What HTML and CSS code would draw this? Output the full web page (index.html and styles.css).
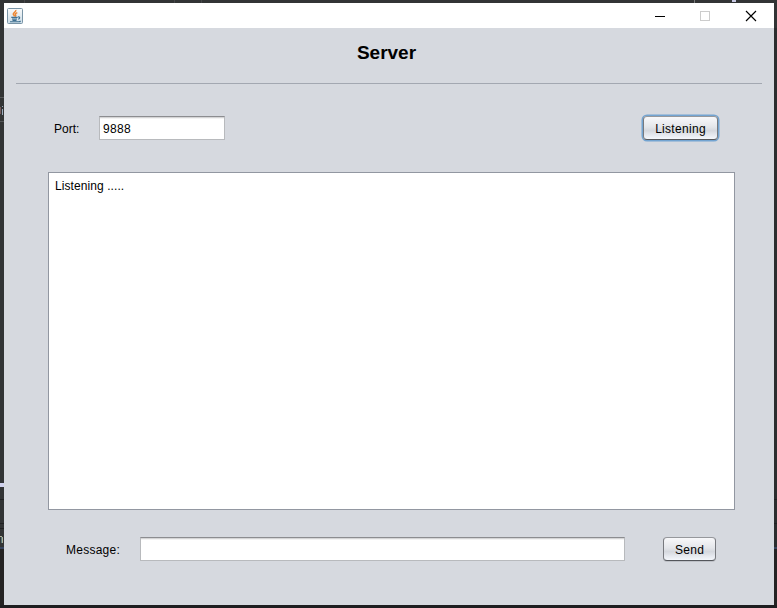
FILE: index.html
```html
<!DOCTYPE html>
<html lang="en">
<head>
<meta charset="utf-8">
<title>Server</title>
<link rel="stylesheet" href="styles.css">
</head>
<body>
<div class="desktop">
  <svg class="backdrop" width="777" height="608" viewBox="0 0 777 608" shape-rendering="crispEdges" aria-hidden="true">
    <rect width="777" height="608" fill="#323435"/>
    <rect y="549" width="777" height="59" fill="#242323"/>
    <rect x="774" y="28" width="3" height="521" fill="#2b2d2e"/>
    <rect y="605" width="777" height="3" fill="#1e1e20"/>
    <path d="M0 97.500h4M0 121.500h4" stroke="#555759"/>
    <path d="M0 499.500h4M0 523.500h4M0 528.500h4M774 499.500h3M774 523.500h3" stroke="#202122"/>
    <path d="M0 548h4M774 548h3" stroke="#37455f" stroke-width="2"/>
    <path d="M0 485h4" stroke="#d0d2ee" stroke-width="4"/>
    <path d="M732 1h4" stroke="#c8c9e4" stroke-width="2"/>
    <path d="M694.500 0v3" stroke="#77797a"/>
    <path d="M174.500 0v3M24.500 0v3M201.500 0v3" stroke="#454648"/>
    <path d="M2.500 109v6M2.500 106v1" stroke="#9babbd"/>
    <path d="M0.500 107v7" stroke="#765c5d"/>
    <path d="M0 536.500h2M2.500 537v6" stroke="#b0b09b"/>
    <path d="M1.500 537v6" stroke="#567777"/>
  </svg>
  <main class="window">
    <header class="titlebar">
      <svg class="java-icon" width="16" height="16" viewBox="0 0 16 16" aria-hidden="true">
        <defs><linearGradient id="tile" x2="0" y2="1"><stop stop-color="#fafafa"/><stop offset="1" stop-color="#cbdce7"/></linearGradient></defs>
        <rect x=".5" y=".5" width="15" height="15" rx="1" fill="url(#tile)" stroke="#7994a6"/>
        <path d="M8.800 2C9.300 3.900 5.800 4.700 6.300 6.300c.2.800 1.300 1.200 1.300 2.200M10.300 4.600C8.300 5.400 8 6 8.600 7c.4.700.1 1.200-.4 1.600" fill="none" stroke="#ed8734" stroke-width="1.500"/>
        <path d="M4.300 9.300h6.400M5 11h5M5.500 12.300h4M3 13.700h8.800c.8 0 1.400-.3 1.800-.7M11 9c2.200-.4 2.200 1.700.2 2.200" fill="none" stroke="#3f6f90" stroke-width="1.150"/>
      </svg>
      <svg class="controls" width="104" height="12" viewBox="0 0 104 12" aria-hidden="true">
        <path d="M0 6.500h10" stroke="#000" shape-rendering="crispEdges"/>
        <rect x="45.500" y="1.500" width="9" height="9" fill="none" stroke="#ccc" shape-rendering="crispEdges"/>
        <path d="M91 1l10 10M101 1L91 11" stroke="#000" stroke-width="1.150"/>
      </svg>
    </header>
    <section class="content">
      <h1 class="heading">Server</h1>
      <div class="connection">
        <label class="port-label" for="port">Port:</label>
        <input class="field port" id="port" value="9888">
        <button class="button listen">Listening</button>
      </div>
      <div class="log">Listening .....</div>
      <div class="compose">
        <label class="message-label" for="message">Message:</label>
        <input class="field message" id="message">
        <button class="button send">Send</button>
      </div>
    </section>
  </main>
</div>
</body>
</html>
```
FILE: styles.css
```css
* { box-sizing: border-box; }
body {
  margin: 0;
  overflow: hidden;
  font: 12px/14px "Liberation Sans", Arial, sans-serif;
  color: #000;
}
.desktop {
  position: relative;
  width: 777px;
  height: 608px;
  padding: 3px 3px 3px 4px;
}
.backdrop { position: absolute; inset: 0; }
.window {
  position: relative;
  height: 602px;
  display: flex;
  flex-direction: column;
  background: #d6d9df;
}
.titlebar {
  height: 25px;
  display: flex;
  align-items: center;
  justify-content: space-between;
  padding: 0 15px 0 3px;
  background: #fff;
}
.java-icon, .controls { display: block; }
.content { padding: 0 12px; }
.heading {
  height: 56px;
  margin: 0;
  padding: 14px 5px 0 0;
  border-bottom: 1px solid #a3a8b1;
  font-size: 19px;
  line-height: 22px;
  text-align: center;
}
.connection {
  display: flex;
  align-items: center;
  height: 26px;
  margin: 31px 43px 0 38px;
}
.port-label { width: 45px; padding-top: 2px; }
.field {
  height: 24px;
  padding: 1px 3px 0;
  border: 1px solid #b8babd;
  border-top-color: #8c8d90;
  border-radius: 0;
  outline: 0;
  background: linear-gradient(#d5d5d6 0 1px, #f3f3f3 1px 2px, #fff 2px);
  font: inherit;
  letter-spacing: .3px;
  color: inherit;
}
.port { width: 126px; }
.button {
  height: 24px;
  padding: 1px 0 0;
  border: 1px solid #77797e;
  border-top-color: #96989c;
  border-bottom-color: #54565b;
  border-radius: 4px;
  background: linear-gradient(#f8f8fa, #e4e6ea 45%, #d5d8de 62%, #e4e7ed 80%, #f4f7fc);
  font: inherit;
  letter-spacing: .3px;
  color: inherit;
}
.listen {
  width: 75px;
  margin: 0 1px 0 auto;
  box-shadow: 0 0 0 1.500px #73a4d1;
}
.log {
  height: 338px;
  margin: 31px 27px 0 32px;
  padding: 6px;
  border: 1px solid #9297a1;
  background: #fff;
  letter-spacing: .08px;
}
.compose {
  display: flex;
  align-items: center;
  height: 24px;
  margin: 27px 46px 0 50px;
}
.message-label { width: 74px; padding-top: 2px; letter-spacing: .25px; }
.message { width: 485px; }
.send { width: 53px; margin-left: auto; box-shadow: 0 1px 0 #bec1c7; }
```
